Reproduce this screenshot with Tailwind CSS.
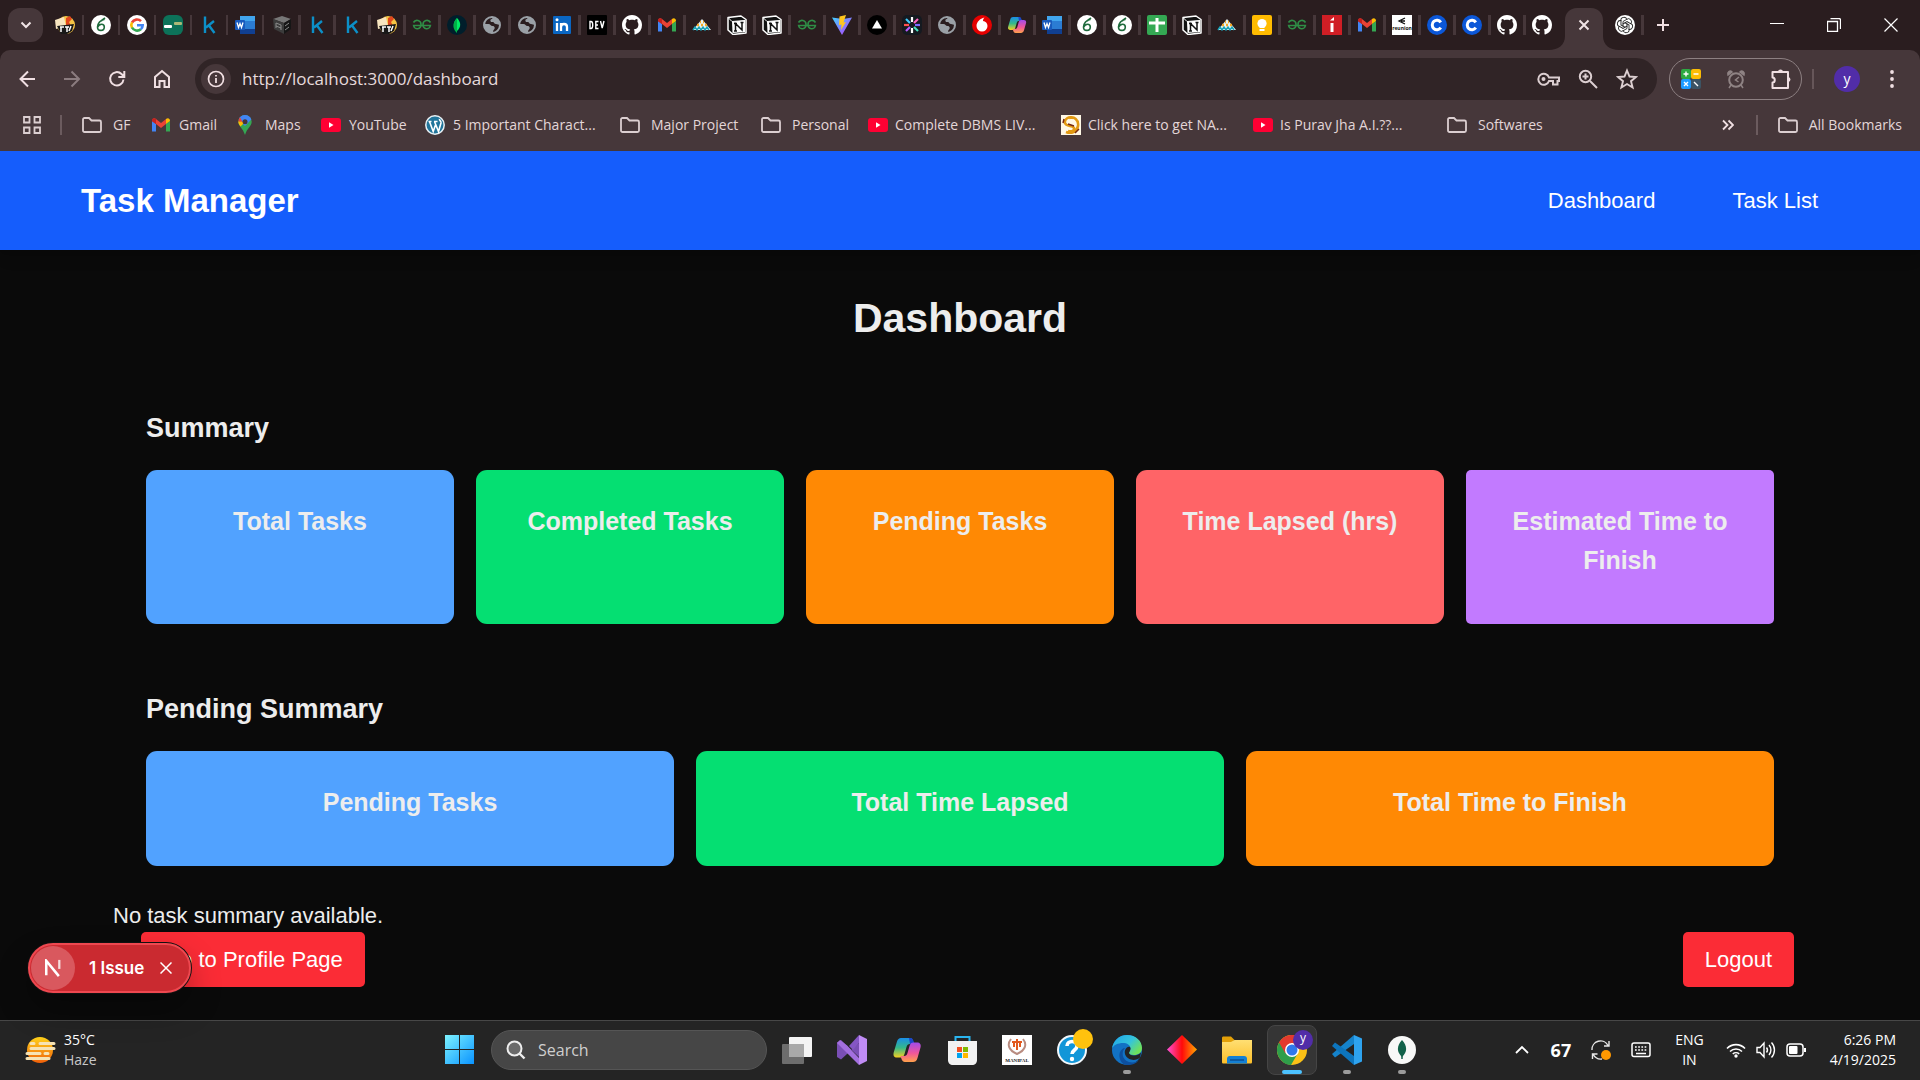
<!DOCTYPE html>
<html lang="en">
<head>
<meta charset="utf-8">
<title>Task Manager</title>
<script src="https://cdn.jsdelivr.net/npm/@tailwindcss/browser@4"></script>
</head>
<body class="min-h-screen flex flex-col bg-[#0a0a0a] text-[#ededed] font-['Liberation_Sans',Arial,sans-serif]">

<!-- Shared icon symbols -->
<svg class="absolute size-0" aria-hidden="true">
  <defs>
    <linearGradient id="vg" x1="0" y1="0" x2="1" y2="1"><stop offset="0" stop-color="#41d1ff"/><stop offset="1" stop-color="#bd34fe"/></linearGradient>
    <linearGradient id="cpl" x1="0" y1="0" x2="0" y2="1"><stop offset="0" stop-color="#1a8ee8"/><stop offset=".5" stop-color="#35b98a"/><stop offset="1" stop-color="#f5d020"/></linearGradient>
    <linearGradient id="cpr" x1="0" y1="0" x2="0" y2="1"><stop offset="0" stop-color="#a14bea"/><stop offset=".55" stop-color="#f0569a"/><stop offset="1" stop-color="#ffa14a"/></linearGradient>
    <linearGradient id="win" x1="0" y1="0" x2="1" y2="1"><stop offset="0" stop-color="#7df3ff"/><stop offset="1" stop-color="#0a93ff"/></linearGradient>
    <linearGradient id="sun" x1="0" y1="0" x2="0" y2="1"><stop offset="0" stop-color="#ffd21a"/><stop offset="1" stop-color="#f0600a"/></linearGradient>
    <linearGradient id="dia" x1="0" y1="0" x2="1" y2="0"><stop offset="0" stop-color="#ff4fd8"/><stop offset=".5" stop-color="#ff0a0a"/><stop offset="1" stop-color="#ffa800"/></linearGradient>
    <linearGradient id="edg" x1="0" y1="0" x2="1" y2=".6"><stop offset="0" stop-color="#1ea4e8"/><stop offset=".6" stop-color="#35c4dc"/><stop offset="1" stop-color="#6fe25a"/></linearGradient>
    <linearGradient id="fold" x1="0" y1="0" x2="0" y2="1"><stop offset="0" stop-color="#ffdf73"/><stop offset="1" stop-color="#fcbf2a"/></linearGradient>
  </defs>
  <symbol id="jt" viewBox="0 0 20 20"><circle cx="11" cy="10" r="9" fill="#f6c445"/><path d="M0 5l9-3 2 9-10 3z" fill="#f7e5c0"/><path d="M11 3l4-2 2 3-3 3 2 4-5-1z" fill="#e0461c"/><path d="M2 11l17-2-2 7-5 3H6z" fill="#181818"/><path d="M6 12v5M5 12h4M12 12v5M10 12h4M16 11l-2 5" stroke="#fff" stroke-width="1.500"/></symbol>
  <symbol id="six" viewBox="0 0 20 20"><circle cx="10" cy="10" r="10" fill="#fff"/><path d="M13.500 4.500c-4 0-7 4-7 7.500 0 2 1.300 3.400 3.300 3.400s3.500-1.500 3.500-3.400c0-1.700-1.200-2.800-2.700-2.800-1.800 0-3.200 1.300-4 3M10 6l4-3" fill="none" stroke="#1e6a3c" stroke-width="1.600"/></symbol>
  <symbol id="goog" viewBox="0 0 20 20"><circle cx="10" cy="10" r="10" fill="#fff"/><g fill="none" stroke-width="2.600"><path d="M14 6.200A5.700 5.700 0 0 0 5 7.500" stroke="#ea4335"/><path d="M5 7.300a5.700 5.700 0 0 0 0 5.500" stroke="#fbbc05"/><path d="M5 12.500a5.700 5.700 0 0 0 8.800 1.700" stroke="#34a853"/><path d="M13.800 14.200a5.500 5.500 0 0 0 1.900-4H10" stroke="#4285f4"/></g></symbol>
  <symbol id="grn" viewBox="0 0 20 20"><rect width="20" height="20" rx="6" fill="#0c7259"/><rect x="1" y="10" width="8" height="3" rx="1" fill="#fff"/><rect x="11" y="7" width="8" height="3" rx="1" fill="#a9b878"/></symbol>
  <symbol id="k" viewBox="0 0 20 20"><path d="M6 1.500V18M15 6l-8 6.500M10 10.500l5.500 7.500" fill="none" stroke="#0c8fc7" stroke-width="2.400"/></symbol>
  <symbol id="word" viewBox="0 0 20 20"><rect x="5" y="1" width="15" height="18" rx="1.500" fill="#2b7cd3"/><path d="M5 1h15v5H5z" fill="#41a5ee"/><path d="M5 14h15v5H5z" fill="#103f91"/><rect y="5" width="10" height="10" rx="1" fill="#185abd"/><path d="M2 7.500l1.500 5L5 8.500l1.500 4 1.500-5" fill="none" stroke="#fff" stroke-width="1.300"/></symbol>
  <symbol id="cube" viewBox="0 0 20 20"><path d="M10 1l9 3-7 4L1 4z" fill="#777"/><path d="M1 4l11 4v11L2 14z" fill="#3c3c3c"/><path d="M19 4l-7 4v11l7-5z" fill="#161616"/><path d="M4 8l5 2M4 11l5 2M4 8v5M9 10v5M13 11l4-3M13 15l4-3" stroke="#8a8a8a"/></symbol>
  <symbol id="gfg" viewBox="0 0 20 20"><g fill="none" stroke="#2f8d46" stroke-width="1.600"><path d="M1.500 7.500A4 4 0 0 1 9 9.500a3.700 3.700 0 0 1-7.400 1H18.400A3.700 3.700 0 0 1 11 9.500a4 4 0 0 1 7.500-2"/></g></symbol>
  <symbol id="leaf" viewBox="0 0 20 20"><circle cx="10" cy="10" r="10" fill="#001e2b"/><path d="M10 3c4 4 4.500 9 0 13-4.500-4-4-9 0-13z" fill="#00ed64"/><path d="M10 3v15c-1-1-4-4-3.500-8C7 6 9 5 10 3z" fill="#00b048"/></symbol>
  <symbol id="globe" viewBox="0 0 20 20"><circle cx="10" cy="10" r="8" fill="none" stroke="#9aa0a6" stroke-width="2"/><path d="M11 2l-1 2c-2 0-2 2-1 3h2c1 0 1 2 3 2l4 1c0-4-3-8-7-8zM2.500 9h4c2 0 2 2 4 2 2 0 3 2 1.500 3.500-1 1-1 2-1 3.500C6 18.500 2 15 2.500 9z" fill="#9aa0a6"/></symbol>
  <symbol id="linkedin" viewBox="0 0 20 20"><rect x="1" y="1" width="18" height="18" rx="1" fill="#0a66c2"/><path d="M5 8v8M9 8v8M9 12c0-4 6-4 6 0v4" fill="none" stroke="#fff" stroke-width="2.300"/><circle cx="5" cy="4.800" r="1.500" fill="#fff"/></symbol>
  <symbol id="dev" viewBox="0 0 20 20"><rect width="20" height="20" rx="1" fill="#000"/><path d="M3 6.500v7h1c2.300 0 2.300-7 0-7zM11.500 6.500H8.800v7h2.700M9 10h2M13.500 6l1.700 7L17 6" fill="none" stroke="#fff" stroke-width="1.400"/></symbol>
  <symbol id="gh" viewBox="0 0 16 16"><path fill="#fff" d="M8 0C3.580 0 0 3.580 0 8c0 3.540 2.290 6.530 5.470 7.590.4.070.55-.17.55-.38 0-.19-.01-.82-.01-1.490-2.010.37-2.530-.49-2.690-.94-.09-.23-.48-.94-.82-1.130-.28-.15-.68-.52-.01-.53.63-.01 1.080.58 1.230.82.72 1.210 1.870.87 2.330.66.07-.52.28-.87.51-1.070-1.780-.2-3.640-.89-3.640-3.950 0-.87.31-1.590.82-2.150-.08-.2-.36-1.020.08-2.120 0 0 .67-.21 2.200.82.64-.18 1.320-.27 2-.27s1.360.09 2 .27c1.530-1.040 2.200-.82 2.200-.82.44 1.100.16 1.920.08 2.120.51.56.82 1.270.82 2.150 0 3.070-1.870 3.750-3.650 3.950.29.25.54.73.54 1.480 0 1.070-.01 1.930-.01 2.200 0 .21.15.46.55.38A8.010 8.010 0 0 0 16 8c0-4.420-3.580-8-8-8z"/></symbol>
  <symbol id="gmail" viewBox="0 0 20 20"><path d="M1 6v10.500h4V9z" fill="#4285f4"/><path d="M19 6v10.500h-4V9z" fill="#34a853"/><path d="M1 6c0-3 2.500-3.300 4-2l5 4 5-4v5l-5 4-5-4-4-3z" fill="#ea4335"/><path d="M15 4c1.500-1.300 4-1 4 2l-4 3z" fill="#fbbc04"/><path d="M1 5.500C1 2.700 3.500 2.700 5 4v5L1 6z" fill="#c5221f"/></symbol>
  <symbol id="tri" viewBox="0 0 20 20"><path d="M10 4L1 15h18z" fill="#e6f3f3"/><path d="M1 15l2-3 2 3 2-3 2 3 2-3 2 3 2-3 2 3" stroke="#1aa3b8" fill="none" stroke-width="1.500"/><path d="M5 10h2M9 10h2M13 10h2M8 7h1M11 7h1" stroke="#f5a623" stroke-width="2.400"/></symbol>
  <symbol id="notion" viewBox="0 0 20 20"><path d="M1 2.500L14 1l5 3.500V18L6 19.500 1 15z" fill="#111" stroke="#fff" stroke-width="1.500" stroke-linejoin="round"/><path d="M5 6.500l13-1V17L5.500 18z" fill="#fff"/><path d="M1.500 3L5 6.500 18 5.500" stroke="#fff" fill="none"/><path d="M8.500 16V8.500L15 15V7.500M7 8.500h3M13.500 7.500h3M7 16h3" fill="none" stroke="#111" stroke-width="1.500"/></symbol>
  <symbol id="vite" viewBox="0 0 20 20"><path d="M0 2.500L10 20 20 2.500 11 4z" fill="url(#vg)"/><path d="M14 0L7.500 1.500 7 10l2.500-.5L9 15l5-8-2.500.5z" fill="#ffc61e"/></symbol>
  <symbol id="vercel" viewBox="0 0 20 20"><circle cx="10" cy="10" r="10" fill="#000"/><path d="M10 5l5 8.500H5z" fill="#fff"/></symbol>
  <symbol id="burst" viewBox="0 0 20 20"><rect width="20" height="20" rx="5" fill="#151a20"/><g stroke-width="2.200"><path d="M10 2v5" stroke="#fff"/><path d="M10 13v5" stroke="#fff"/><path d="M2 10h5" stroke="#ff4f4f"/><path d="M13 10h5" stroke="#7a6bff"/><path d="M4 4l4 4" stroke="#3ecbff"/><path d="M16 4l-4 4" stroke="#ff66c4"/><path d="M4 16l4-4" stroke="#b65cff"/><path d="M16 16l-4-4" stroke="#4be3c2"/></g></symbol>
  <symbol id="voda" viewBox="0 0 20 20"><circle cx="10" cy="10" r="10" fill="#e60000"/><path d="M12.500 2.500C8 3.500 4.500 7 4.500 11a5.500 5.500 0 0 0 11 0c0-2.800-2-4.600-4.500-5 0-1.500.5-2.700 1.500-3.500z" fill="#fff"/></symbol>
  <symbol id="copilot" viewBox="0 0 30 30"><path d="M9 3h9c2 0 2.500 1.500 3 3l1 3h-4c-2 0-3 1-3.500 3l-2 7c-.7 2.500-2 3.500-4 3.500H5c-3 0-4-2-3.300-5L5 6.500C5.700 4.200 7 3 9 3z" fill="url(#cpl)"/><path d="M17 3h1.500c2 0 2.500 1.500 3 3l1 3H18z" fill="#1c46c9"/><path d="M21 27h-8c-2 0-3-1.500-3.500-3L8.500 21H12c2 0 3-1 3.500-3l2-7c.7-2.500 2-3.500 4-3.500H25c3 0 4.300 2 3.500 5l-3 10.500C24.700 26 23 27 21 27z" fill="url(#cpr)"/></symbol>
  <symbol id="sheet" viewBox="0 0 20 20"><rect width="20" height="20" rx="2" fill="#34a853"/><path d="M10 3v14M2 8h16" stroke="#fff" stroke-width="3"/></symbol>
  <symbol id="keep" viewBox="0 0 20 20"><rect width="20" height="20" rx="2" fill="#ffbb00"/><circle cx="10" cy="8.500" r="4.600" fill="#fff"/><path d="M7.500 12h5v1h-5zM7.500 14h5v2h-5z" fill="#fff"/></symbol>
  <symbol id="ii" viewBox="0 0 20 20"><rect width="20" height="20" fill="#cf1e25"/><path d="M10 8v9" stroke="#fff" stroke-width="3"/><path d="M8 5.500L12 2v3.500z" fill="#fff"/></symbol>
  <symbol id="reunion" viewBox="0 0 20 20"><rect width="20" height="20" fill="#fff"/><path d="M13 3L7 6l6 3M9 6h4" fill="none" stroke="#111" stroke-width="1.300"/><text x="10" y="15" font-size="5" font-weight="700" text-anchor="middle" fill="#111">reunion</text></symbol>
  <symbol id="cc" viewBox="0 0 20 20"><circle cx="10" cy="10" r="10" fill="#0b57d8"/><path d="M13.800 7.300a4.700 4.700 0 1 0 0 5.400" fill="none" stroke="#fff" stroke-width="3"/></symbol>
  <symbol id="gpt" viewBox="0 0 20 20"><circle cx="10" cy="10" r="10" fill="#fff"/><g fill="none" stroke="#222" stroke-width=".9"><path id="petal" d="M8 11.500V6.500l3.500-2a3 3 0 0 1 4 4.500"/><use href="#petal" transform="rotate(60 10 10)"/><use href="#petal" transform="rotate(120 10 10)"/><use href="#petal" transform="rotate(180 10 10)"/><use href="#petal" transform="rotate(240 10 10)"/><use href="#petal" transform="rotate(300 10 10)"/></g></symbol>
  <symbol id="folder" viewBox="0 0 20 16"><path d="M1 13.500v-11C1 1.700 1.700 1 2.500 1H7l2.500 2.500h8c.8 0 1.500.7 1.500 1.500v8.500c0 .8-.7 1.500-1.500 1.500h-15C1.700 15 1 14.300 1 13.500z" fill="none" stroke="#dccfd1" stroke-width="1.800"/></symbol>
  <symbol id="yt" viewBox="0 0 20 14"><rect width="20" height="14" rx="3" fill="#ff0033"/><path d="M8 4.300v5.400L12.500 7z" fill="#fff"/></symbol>
</svg>

<!-- Browser chrome -->
<div class="bg-[#2a1d1f] font-['Open_Sans','Noto_Sans',sans-serif] text-[#e3d6d8]">
  <div class="flex h-[50px] items-center">
    <button aria-label="Search tabs" class="ml-2 mr-3 flex h-[34px] w-[35px] items-center justify-center rounded-xl bg-[#46373a]"><svg class="h-3 w-3" viewBox="0 0 12 12"><path d="M1.500 3.500L6 8l4.500-4.500" fill="none" stroke="#f0e4e6" stroke-width="2"/></svg></button>
    <div class="flex gap-[7px] pr-2 items-center">
      <svg class="size-5"><use href="#jt"/></svg><i class="h-5 w-0.5 bg-[#46373a]"></i>
      <svg class="size-5"><use href="#six"/></svg><i class="h-5 w-0.5 bg-[#46373a]"></i>
      <svg class="size-5"><use href="#goog"/></svg><i class="h-5 w-0.5 bg-[#46373a]"></i>
      <svg class="size-5"><use href="#grn"/></svg><i class="h-5 w-0.5 bg-[#46373a]"></i>
      <svg class="size-5"><use href="#k"/></svg><i class="h-5 w-0.5 bg-[#46373a]"></i>
      <svg class="size-5"><use href="#word"/></svg><i class="h-5 w-0.5 bg-[#46373a]"></i>
    </div>
    <div class="flex gap-1.5 items-center">
      <svg class="size-5"><use href="#cube"/></svg><i class="h-5 w-[3px] bg-[#46373a]"></i>
      <svg class="size-5"><use href="#k"/></svg><i class="h-5 w-[3px] bg-[#46373a]"></i>
      <svg class="size-5"><use href="#k"/></svg><i class="h-5 w-[3px] bg-[#46373a]"></i>
      <svg class="size-5"><use href="#jt"/></svg><i class="h-5 w-[3px] bg-[#46373a]"></i>
      <svg class="size-5"><use href="#gfg"/></svg><i class="h-5 w-[3px] bg-[#46373a]"></i>
      <svg class="size-5"><use href="#leaf"/></svg><i class="h-5 w-[3px] bg-[#46373a]"></i>
      <svg class="size-5"><use href="#globe"/></svg><i class="h-5 w-[3px] bg-[#46373a]"></i>
      <svg class="size-5"><use href="#globe"/></svg><i class="h-5 w-[3px] bg-[#46373a]"></i>
      <svg class="size-5"><use href="#linkedin"/></svg><i class="h-5 w-[3px] bg-[#46373a]"></i>
      <svg class="size-5"><use href="#dev"/></svg><i class="h-5 w-[3px] bg-[#46373a]"></i>
      <svg class="size-5"><use href="#gh"/></svg><i class="h-5 w-[3px] bg-[#46373a]"></i>
      <svg class="size-5"><use href="#gmail"/></svg><i class="h-5 w-[3px] bg-[#46373a]"></i>
      <svg class="size-5"><use href="#tri"/></svg><i class="h-5 w-[3px] bg-[#46373a]"></i>
      <svg class="size-5"><use href="#notion"/></svg><i class="h-5 w-[3px] bg-[#46373a]"></i>
      <svg class="size-5"><use href="#notion"/></svg><i class="h-5 w-[3px] bg-[#46373a]"></i>
      <svg class="size-5"><use href="#gfg"/></svg><i class="h-5 w-[3px] bg-[#46373a]"></i>
      <svg class="size-5"><use href="#vite"/></svg><i class="h-5 w-[3px] bg-[#46373a]"></i>
      <svg class="size-5"><use href="#vercel"/></svg><i class="h-5 w-[3px] bg-[#46373a]"></i>
      <svg class="size-5"><use href="#burst"/></svg><i class="h-5 w-[3px] bg-[#46373a]"></i>
      <svg class="size-5"><use href="#globe"/></svg><i class="h-5 w-[3px] bg-[#46373a]"></i>
      <svg class="size-5"><use href="#voda"/></svg><i class="h-5 w-[3px] bg-[#46373a]"></i>
      <svg class="size-5"><use href="#copilot"/></svg><i class="h-5 w-[3px] bg-[#46373a]"></i>
      <svg class="size-5"><use href="#word"/></svg><i class="h-5 w-[3px] bg-[#46373a]"></i>
      <svg class="size-5"><use href="#six"/></svg><i class="h-5 w-[3px] bg-[#46373a]"></i>
      <svg class="size-5"><use href="#six"/></svg><i class="h-5 w-[3px] bg-[#46373a]"></i>
      <svg class="size-5"><use href="#sheet"/></svg><i class="h-5 w-[3px] bg-[#46373a]"></i>
      <svg class="size-5"><use href="#notion"/></svg><i class="h-5 w-[3px] bg-[#46373a]"></i>
      <svg class="size-5"><use href="#tri"/></svg><i class="h-5 w-[3px] bg-[#46373a]"></i>
      <svg class="size-5"><use href="#keep"/></svg><i class="h-5 w-[3px] bg-[#46373a]"></i>
      <svg class="size-5"><use href="#gfg"/></svg><i class="h-5 w-[3px] bg-[#46373a]"></i>
      <svg class="size-5"><use href="#ii"/></svg><i class="h-5 w-[3px] bg-[#46373a]"></i>
      <svg class="size-5"><use href="#gmail"/></svg><i class="h-5 w-[3px] bg-[#46373a]"></i>
      <svg class="size-5"><use href="#reunion"/></svg><i class="h-5 w-[3px] bg-[#46373a]"></i>
      <svg class="size-5"><use href="#cc"/></svg><i class="h-5 w-[3px] bg-[#46373a]"></i>
      <svg class="size-5"><use href="#cc"/></svg><i class="h-5 w-[3px] bg-[#46373a]"></i>
      <svg class="size-5"><use href="#gh"/></svg><i class="h-5 w-[3px] bg-[#46373a]"></i>
      <svg class="size-5"><use href="#gh"/></svg>
    </div>
    <!-- active tab with flared feet -->
    <button aria-label="Close tab" class="-ml-[3px] h-[50px] w-[70px]">
      <svg class="h-[50px] w-[70px]" viewBox="0 0 70 50"><path d="M0 50c9 0 16-5 16-14V20c0-7 5-12 12-12h14c7 0 12 5 12 12v16c0 9 7 14 16 14z" fill="#46373a"/><path d="M30.500 20.500l9 9M39.500 20.500l-9 9" stroke="#f0e4e6" stroke-width="2"/></svg>
    </button>
    <div class="-ml-1 flex flex-1 items-center gap-1.5">
      <svg class="size-5"><use href="#gpt"/></svg><i class="h-5 w-[3px] bg-[#46373a]"></i>
      <button aria-label="New tab" class="ml-1.5"><svg class="size-3.5" viewBox="0 0 14 14"><path d="M7 1v12M1 7h12" stroke="#f0dfe2" stroke-width="2"/></svg></button>
    </div>
    <div class="flex items-center gap-[43px] pr-[22px]">
      <button aria-label="Minimize"><svg class="size-3.5" viewBox="0 0 14 14"><path d="M0 5.500h14" stroke="#fff"/></svg></button>
      <button aria-label="Restore"><svg class="size-3.5" viewBox="0 0 14 14"><path d="M.5 3.500h10v10H.5zM3.500.5H12A1.500 1.500 0 0 1 13.500 2v9" fill="none" stroke="#fff" stroke-width="1.300"/></svg></button>
      <button aria-label="Close"><svg class="size-3.5" viewBox="0 0 14 14"><path d="M.5.5l13 13M13.500.5l-13 13" stroke="#fff" stroke-width="1.200"/></svg></button>
    </div>
  </div>

  <div class="rounded-t-[10px] bg-[#46373a]">
    <div class="flex h-[58px] items-center pl-4">
      <div class="flex gap-[23px] pr-[22px]">
        <button aria-label="Back"><svg class="size-[22px]" viewBox="0 0 22 22"><path d="M19 11H5M12 3.500L4.500 11l7.500 7.500" fill="none" stroke="#f0dfe2" stroke-width="2"/></svg></button>
        <button aria-label="Forward"><svg class="size-[22px]" viewBox="0 0 22 22"><path d="M3 11h14M10.500 3.500L18 11l-7.500 7.500" fill="none" stroke="#8b7c7f" stroke-width="2"/></svg></button>
        <button aria-label="Reload"><svg class="size-[22px]" viewBox="0 0 22 22"><path d="M17.500 11.500a6.700 6.700 0 1 1-2-5.500l2.500 2.500M18.300 3v6h-6" fill="none" stroke="#f0dfe2" stroke-width="2"/></svg></button>
        <button aria-label="Home"><svg class="size-[22px]" viewBox="0 0 22 22"><path d="M4 19V9l7-6 7 6v10h-4.500v-6h-5v6z" fill="none" stroke="#f0dfe2" stroke-width="2"/></svg></button>
      </div>
      <div class="flex h-[42px] flex-1 items-center rounded-full bg-[#302426] pl-1.5 pr-[19px]">
        <button aria-label="Site information" class="mr-[11px] flex size-[30px] items-center justify-center rounded-full bg-[#46373a]"><svg class="size-[18px]" viewBox="0 0 18 18"><circle cx="9" cy="9" r="7.500" fill="none" stroke="#f0dfe2" stroke-width="1.700"/><path d="M9 8v5M9 5v1.600" stroke="#f0dfe2" stroke-width="1.800"/></svg></button>
        <input aria-label="Address" value="http://localhost:3000/dashboard" class="flex-1 bg-transparent text-[17px] text-[#e6dadc] outline-none">
        <div class="flex items-center gap-[18px]">
          <svg class="h-5 w-6" viewBox="0 0 24 20"><path d="M13 8.500h10v3.500h-1.500v3.500H17V12h-4a5.500 5.500 0 1 1 0-3.500z" fill="none" stroke="#dccfd1" stroke-width="2"/><circle cx="7.500" cy="10" r="2" fill="#dccfd1"/></svg>
          <svg class="size-5" viewBox="0 0 20 20"><path d="M12 12l7 7M4.500 7.500h6M7.500 4.500v6" stroke="#dccfd1" stroke-width="2"/><circle cx="7.500" cy="7.500" r="5.700" fill="none" stroke="#dccfd1" stroke-width="2"/></svg>
          <svg class="size-[22px]" viewBox="0 0 22 22"><path d="M11 2.500l2.500 6 6.500.5-5 4.200 1.600 6.300L11 16l-5.600 3.500L7 13.200 2 9l6.500-.5z" fill="none" stroke="#dccfd1" stroke-width="1.900"/></svg>
        </div>
      </div>
      <div class="ml-3 flex h-[42px] w-[133px] items-center justify-between rounded-full border border-[#8d8082] pl-2.5 pr-[9px]">
        <svg class="size-[22px]" viewBox="0 0 22 22"><rect x="1" y="1" width="10" height="10" rx="2" fill="#2da942"/><rect x="11" y="1" width="10" height="10" rx="2" fill="#fbbc05"/><rect x="1" y="11" width="10" height="10" rx="2" fill="#1e9bff"/><rect x="11" y="11" width="10" height="10" rx="2" fill="#3c5464"/><path d="M3.500 6h5M6 3.500v5M13.500 6h5M4 14l4 4M8 14l-4 4M14 14l4 4" stroke="#fff" stroke-width="1.400"/></svg>
        <svg class="size-5" viewBox="0 0 20 20"><circle cx="10" cy="11" r="6.800" fill="none" stroke="#8f8384" stroke-width="2"/><path d="M2 6C1 3 4 1 6 3zM18 6c1-3-2-5-4-3zM5 16l-2 3M15 16l2 3" fill="#8f8384" stroke="#8f8384" stroke-width="1.500"/><path d="M13 8l-3.500 3 3 2" fill="none" stroke="#8f8384" stroke-width="1.500"/></svg>
        <svg class="size-[22px]" viewBox="0 0 22 22"><path d="M2.500 4H18V10v3.500V20H2.500v-5.500c3 0 3-5 0-5z" fill="none" stroke="#f0dfe2" stroke-width="2" stroke-linejoin="round"/><path d="M8 4a2.500 2.500 0 0 1 5 0zM18 9a2.500 2.500 0 0 1 0 5z" fill="#f0dfe2"/></svg>
      </div>
      <i class="ml-2.5 h-5 w-0.5 bg-[#665659]"></i>
      <button class="ml-[20px] size-[26px] rounded-full bg-[#512da8] text-center text-sm leading-[22px] text-white">y</button>
      <button aria-label="Menu" class="ml-[30px] mr-[26px]"><svg class="h-[18px] w-1" viewBox="0 0 4 18"><circle cx="2" cy="2" r="1.900" fill="#f0dfe2"/><circle cx="2" cy="9" r="1.900" fill="#f0dfe2"/><circle cx="2" cy="16" r="1.900" fill="#f0dfe2"/></svg></button>
    </div>

    <div class="flex h-[43px] items-center pb-2.5 pl-[23px] pr-[18px] text-sm whitespace-nowrap">
      <svg class="size-[18px]" viewBox="0 0 18 18"><path d="M1 1h5.500v5.500H1zM11.500 1H17v5.500h-5.500zM1 11.500h5.500V17H1zM11.500 11.500H17V17h-5.500z" fill="none" stroke="#dccfd1" stroke-width="1.800"/></svg>
      <i class="ml-[19px] mr-5 h-5 w-0.5 bg-[#6b5b5e]"></i>
      <nav class="grid flex-1 grid-cols-[69px_85px_85px_104px_195px_141px_107px_193px_192px_194px_120px]">
        <a href="#" class="flex items-center gap-[11px]"><svg class="h-4 w-5"><use href="#folder"/></svg>GF</a>
        <a href="#" class="flex items-center gap-2"><svg class="size-5"><use href="#gmail"/></svg>Gmail</a>
        <a href="#" class="flex items-center gap-[11px]"><svg class="h-5 w-[18px]" viewBox="0 0 18 20"><path d="M9 0a6.700 6.700 0 0 0-6.700 6.700C2.300 11 7 13 9 20c2-7 6.700-9 6.700-13.300A6.700 6.700 0 0 0 9 0z" fill="#34a853"/><path d="M9 0a6.700 6.700 0 0 1 6.300 4.500L9 11 2.700 4.500A6.700 6.700 0 0 1 9 0z" fill="#4285f4"/><path d="M4 2.300A6.700 6.700 0 0 0 2.300 6.700L6.500 7z" fill="#ea4335"/><path d="M2.300 6.500c0 2 1 3.500 2.200 5L9 7z" fill="#fbbc04"/><circle cx="9" cy="6.700" r="2.500" fill="#46373a"/></svg>Maps</a>
        <a href="#" class="flex items-center gap-2"><svg class="h-3.5 w-5"><use href="#yt"/></svg>YouTube</a>
        <a href="#" class="flex items-center gap-2"><svg class="size-5" viewBox="0 0 20 20"><circle cx="10" cy="10" r="9.200" fill="#21759b" stroke="#e8f1f5" stroke-width="1.500"/><path d="M3.500 6.500h3M9 6.500h3.500M4.500 6.500l3.700 10L10.500 10M9.500 6.500l4 10L16 8c.5-2-2-2.500-1.500-4" fill="none" stroke="#fff" stroke-width="1.600"/></svg>5 Important Charact...</a>
        <a href="#" class="flex items-center gap-[11px]"><svg class="h-4 w-5"><use href="#folder"/></svg>Major Project</a>
        <a href="#" class="flex items-center gap-[11px]"><svg class="h-4 w-5"><use href="#folder"/></svg>Personal</a>
        <a href="#" class="flex items-center gap-[7px]"><svg class="h-3.5 w-5"><use href="#yt"/></svg>Complete DBMS LIV...</a>
        <a href="#" class="flex items-center gap-[7px]"><svg class="size-5" viewBox="0 0 20 20"><rect width="20" height="20" fill="#fff8e6"/><path d="M12 3C8 1 3 4 4 8s8 2 9 5-3 4-6 3M8 3c5-2 10 2 9 8s-7 8-12 6" fill="none" stroke="#e39a12" stroke-width="2.600"/><path d="M3 4l-1 4M18 14l-4 4M7 9l6 2" stroke="#7a2a10" stroke-width="1.500"/></svg>Click here to get NA...</a>
        <a href="#" class="flex items-center gap-[7px]"><svg class="h-3.5 w-5"><use href="#yt"/></svg>Is Purav Jha A.I.??...</a>
        <a href="#" class="flex items-center gap-[11px]"><svg class="h-4 w-5"><use href="#folder"/></svg>Softwares</a>
      </nav>
      <button aria-label="More bookmarks"><svg class="size-3" viewBox="0 0 12 12"><path d="M1 1.500L5.500 6 1 10.500M6.500 1.500L11 6l-4.500 4.500" fill="none" stroke="#f0dfe2" stroke-width="1.800"/></svg></button>
      <i class="ml-[22px] mr-5 h-5 w-0.5 bg-[#6b5b5e]"></i>
      <a href="#" class="flex items-center gap-[11px]"><svg class="h-4 w-5"><use href="#folder"/></svg>All Bookmarks</a>
    </div>
  </div>
</div>

<!-- Page header -->
<header class="flex h-[99px] items-center justify-between bg-blue-600 pl-[81px] pr-20 text-white shadow-lg">
  <h1 class="text-[33px] font-bold">Task Manager</h1>
  <nav class="flex gap-[33px] text-[22px]">
    <a href="#" class="px-[22px]">Dashboard</a>
    <a href="#" class="px-[22px]">Task List</a>
  </nav>
</header>

<main class="relative flex-1 px-[113px] pt-11 text-[22px] leading-[33px]">
  <h2 class="text-center text-[41px] font-bold leading-[49px]">Dashboard</h2>

  <section class="px-[33px] pt-[66px]">
    <h3 class="mb-[22px] text-[27px] font-bold leading-[39px]">Summary</h3>
    <div class="grid grid-cols-5 gap-[22px] text-center text-[25px] font-bold leading-[39px]">
      <div class="rounded-[11px] bg-blue-400 px-[33px] pt-8 pb-11">Total Tasks</div>
      <div class="rounded-[11px] bg-green-400 px-[33px] pt-8 pb-11">Completed Tasks</div>
      <div class="rounded-[11px] bg-orange-400 px-[33px] pt-8 pb-11">Pending Tasks</div>
      <div class="rounded-[11px] bg-red-400 px-[33px] pt-8 pb-11">Time Lapsed (hrs)</div>
      <div class="rounded-[5px] bg-purple-400 px-[33px] pt-8 pb-11">Estimated Time to Finish</div>
    </div>
  </section>

  <section class="px-[33px] pt-[66px]">
    <h3 class="mb-[22px] text-[27px] font-bold leading-[39px]">Pending Summary</h3>
    <div class="grid grid-cols-3 gap-[22px] text-center text-[25px] font-bold leading-[39px]">
      <div class="rounded-[11px] bg-blue-400 px-[33px] pt-8 pb-11">Pending Tasks</div>
      <div class="rounded-[11px] bg-green-400 px-[33px] pt-8 pb-11">Total Time Lapsed</div>
      <div class="rounded-[11px] bg-orange-400 px-[33px] pt-8 pb-11">Total Time to Finish</div>
    </div>
  </section>

  <p class="pt-[33px]">No task summary available.</p>
  <div class="flex justify-between pl-7 pr-[13px] text-white">
    <button class="rounded-[5px] bg-red-500 px-[22px] py-[11px]">Go to Profile Page</button>
    <button class="rounded-[5px] bg-red-500 px-[22px] py-[11px]">Logout</button>
  </div>

  <!-- dev tools issue badge floating over the page -->
  <div class="absolute bottom-[27px] left-7 flex h-[50px] w-[163px] items-center rounded-full border-2 border-[#ee4850] bg-[#ca2a30] pl-px text-white shadow-[0_0_0_1px_#111,0_16px_32px_rgba(0,0,0,0.3)]">
    <span class="flex size-11 items-center justify-center rounded-full bg-[#d9585e]"><svg class="size-[18px]" viewBox="0 0 20 20"><path d="M2.500 18V2l14 17" fill="none" stroke="#fff" stroke-width="2.800"/><path d="M17 1v10" stroke="#fff" stroke-width="2.500" opacity=".8"/></svg></span>
    <button class="ml-3.5 font-['Inter',sans-serif] text-[17px] font-semibold whitespace-nowrap">1 Issue</button>
    <button aria-label="Dismiss" class="ml-4"><svg class="size-3" viewBox="0 0 12 12"><path d="M.5.5l11 11M11.500.5l-11 11" stroke="#fff" stroke-width="1.500"/></svg></button>
  </div>
</main>

<!-- Windows taskbar -->
<footer class="grid h-[60px] grid-cols-[1fr_auto_1fr] items-center border-t border-[#474747] bg-[#242424] px-6 pb-0.5 font-['Open_Sans','Noto_Sans',sans-serif] text-sm leading-5 text-white">
  <div class="flex items-center gap-2">
    <svg class="h-[30px] w-8" viewBox="0 0 32 30"><circle cx="16" cy="15" r="13" fill="url(#sun)"/><path d="M7 8.500h3M16 8.500h14M7 13.500h23M3 18.500h13M21 18.500h3M3 23.500h22" stroke="#f6e3b4" stroke-width="3" stroke-linecap="round"/></svg>
    <p>35°C<br><span class="text-[#c8c8c8]">Haze</span></p>
  </div>

  <div class="flex items-center gap-[25px] pr-[58px]">
    <div class="flex items-center gap-[17px]">
      <button aria-label="Start" class="grid size-[29px]"><svg class="size-[29px]" viewBox="0 0 29 29"><path d="M0 0h14v14H0zM15 0h14v14H15zM0 15h14v14H0zM15 15h14v14H15z" fill="url(#win)"/></svg></button>
      <label class="-mr-2 flex h-10 w-[276px] items-center gap-3 rounded-full border border-[#555] bg-[#464646] pl-3.5 text-base"><svg class="size-5" viewBox="0 0 20 20"><circle cx="8.500" cy="8.500" r="7" fill="#6a6a6a" stroke="#eee" stroke-width="2"/><path d="M13.500 13.500l5 5" stroke="#eee" stroke-width="2.400"/></svg><input aria-label="Search" placeholder="Search" class="w-40 bg-transparent outline-none placeholder:text-[#cfcfcf]"></label>
    </div>
    <button aria-label="Task view" class="-ml-0.5"><svg class="size-[30px]" viewBox="0 0 30 30"><rect x="7" y="2" width="23" height="20" rx="1" fill="#f4f4f4"/><rect y="9" width="22" height="20" rx="1" fill="#6d6d6d"/><path d="M7 9h15v13H7z" fill="#a9a9a9"/></svg></button>
    <button aria-label="Visual Studio"><svg class="size-[30px]" viewBox="0 0 30 30"><path d="M0 7.500l4-2.500 18 17V8L4 24.500 0 22z" fill="#7a4fb5"/><path d="M22 0l8 4v22l-8 4V8z" fill="#c08cf5"/><path d="M3 5l7 5.500 12 12.500v7L0 8z" fill="#a36fdf"/><path d="M22 0L12 11l4 4 6-7z" fill="#8556c4"/></svg></button>
    <button aria-label="Copilot"><svg class="size-[30px]"><use href="#copilot"/></svg></button>
    <button aria-label="Store"><svg class="size-[30px]" viewBox="0 0 30 30"><path d="M8.500 7V2h14v5" fill="none" stroke="#2ab5f0" stroke-width="2"/><path d="M1 6h29v19c0 3-2 5-5 5H6c-3 0-5-2-5-5z" fill="#f2f2f2"/><path d="M10 12h5v5h-5z" fill="#f25022"/><path d="M16 12h5v5h-5z" fill="#7fba00"/><path d="M10 18h5v5h-5z" fill="#00a4ef"/><path d="M16 18h5v5h-5z" fill="#ffb900"/></svg></button>
    <button aria-label="Manipal"><svg class="size-[30px]" viewBox="0 0 30 30"><rect width="30" height="30" fill="#fff"/><path d="M9 4c-4 5-3 11 6 15 9-4 10-10 6-15" fill="none" stroke="#b98c80" stroke-width="2"/><path d="M10 7h10M12 7v5M15 4v11M18 7v5" stroke="#e2591f" stroke-width="2"/><text x="15" y="26.500" text-anchor="middle" font-size="5" font-weight="700" font-family="Liberation Serif" fill="#222">MANIPAL</text></svg></button>
    <button aria-label="Help" class="relative"><svg class="size-[30px]" viewBox="0 0 30 30"><circle cx="15" cy="15" r="14" fill="#1296d8" stroke="#f2f8fc" stroke-width="2"/><path d="M10 11c0-6 10-6 10 0 0 4-5 4-5 8" fill="none" stroke="#fff" stroke-width="3.600"/><circle cx="15" cy="24" r="2.200" fill="#fff"/></svg><i class="absolute -top-1.5 -right-1.5 size-5 rounded-full bg-[#ffc20e]"></i></button>
    <button aria-label="Edge" class="relative"><svg class="size-[30px]" viewBox="0 0 30 30"><circle cx="15" cy="15" r="15" fill="#1272c4"/><path d="M0 14C1 6 7 0 15 0c9 0 15 6 15 13 0 5-4 7-8 7-3 0-5-1-5-2s1.500-2 1.500-4.500C18.500 10 15 8 11 8 6 8 1 10 0 14z" fill="url(#edg)"/><path d="M13 13c-4 4-3 12 4 14 4 1 8 0 10-2-3 4-7 5-12 5C9 30 6 22 8 17c1-2 3-4 5-4z" fill="#0d4f9e"/><path d="M18.500 13.500c0 2.500-1.500 3.500-1.500 4.500s2 2.500 5 2.500c3 0 5-1 7-3l-1 5c-2 2-6 3-9 2-5-1-7-6-6-9 1-4 5.500-5 5.500-2z" fill="#242424"/></svg><i class="absolute -bottom-[9px] left-[11px] h-1 w-2 rounded-full bg-[#9b9b9b]"></i></button>
    <button aria-label="Diamond app"><svg class="size-[30px]" viewBox="0 0 30 30"><path d="M15 0l15 14.500L15 29 0 14.500z" fill="url(#dia)"/></svg></button>
    <button aria-label="File Explorer"><svg class="size-[30px]" viewBox="0 0 30 30"><path d="M0 3c0-1 .5-1.500 1.500-1.500H9L12.500 5 9 9H0z" fill="#e3a008"/><path d="M0 7h9l3.500-2H30v22c0 1-.5 1.500-1.500 1.500h-27C.5 28.500 0 28 0 27z" fill="url(#fold)"/><path d="M5 28.500V24c0-2 1-3 3-3h14c2 0 3 1 3 3v4.500z" fill="#1480d4"/><path d="M8 25h14" stroke="#0b4f93" stroke-width="1.500"/></svg></button>
    <button aria-label="Chrome" class="relative -mx-2.5 flex h-[50px] w-[50px] items-center rounded-lg border border-[#454545] bg-[#353535] pl-[9px]"><svg class="size-[30px]" viewBox="0 0 30 30"><circle cx="15" cy="15" r="15" fill="#fbc116"/><path d="M15 15L2 7.500A15 15 0 0 0 14 30l7-12z" fill="#2f9e4a"/><path d="M15 8h13.300A15 15 0 0 0 2 7.500l6.500 11z" fill="#e23a2e"/><circle cx="15" cy="15" r="7" fill="#fff"/><circle cx="15" cy="15" r="5.500" fill="#2f78ea"/></svg><span class="absolute top-1 right-[3px] size-5 rounded-full bg-[#512da8] text-center text-xs leading-[16px]">y</span><i class="absolute bottom-0 left-3.5 h-1 w-5 rounded-full bg-[#4cc2ff]"></i></button>
    <button aria-label="VS Code" class="relative"><svg class="size-[30px]" viewBox="0 0 30 30"><path d="M22 0l8 3.500v23L22 30z" fill="#2ea3ef"/><path d="M22 0L0 19l3 3.500L22 9z" fill="#1583cb"/><path d="M22 30L0 11l3-3.500L22 21z" fill="#0d75bd"/></svg><i class="absolute -bottom-[9px] left-[11px] h-1 w-2 rounded-full bg-[#9b9b9b]"></i></button>
    <button aria-label="MongoDB Compass" class="relative"><svg class="size-[30px]" viewBox="0 0 30 30"><circle cx="15" cy="15" r="14" fill="#f7f8f7"/><path d="M15 5c5.500 6 5.500 12 0 17-5.500-5-5.500-11 0-17z" fill="#116149"/><path d="M15 20v4" stroke="#116149" stroke-width="1.500"/></svg><i class="absolute -bottom-[9px] left-[11px] h-1 w-2 rounded-full bg-[#9b9b9b]"></i></button>
  </div>

  <div class="flex items-center justify-end">
    <svg class="h-2.5 w-3.5" viewBox="0 0 14 10"><path d="M1 8l6-6 6 6" fill="none" stroke="#fff" stroke-width="1.800"/></svg>
    <b class="ml-[22px] text-lg">67</b>
    <svg class="ml-5 size-5" viewBox="0 0 20 20"><path d="M1 10a8.500 8.500 0 0 1 16-4.500M18 1v5h-5M2 14c2 4 5 5.500 9 5M1.500 19v-5h5" fill="none" stroke="#e8e8e8" stroke-width="1.400"/><circle cx="15" cy="15" r="5" fill="#ff9800"/></svg>
    <svg class="ml-5 h-4 w-5" viewBox="0 0 20 16"><rect x="1" y="1" width="18" height="13.500" rx="2" fill="none" stroke="#fff" stroke-width="1.500"/><path d="M4 5h12M4 8h12" stroke="#fff" stroke-width="1.700" stroke-dasharray="1.700 1.500"/><path d="M5 11.500h10" stroke="#fff" stroke-width="1.500"/></svg>
    <p class="ml-6 text-center">ENG<br>IN</p>
    <svg class="ml-[22px] h-4 w-5" viewBox="0 0 20 16"><path d="M1 6.500a12.500 12.500 0 0 1 18 0M4 9.500a8.500 8.500 0 0 1 12 0M6.800 12a4.700 4.700 0 0 1 6.400 0" fill="none" stroke="#fff" stroke-width="1.600"/><circle cx="10" cy="14" r="1.700" fill="#fff"/></svg>
    <svg class="ml-2.5 h-[18px] w-5" viewBox="0 0 20 18"><path d="M1 6.500h3L8 2v14l-4-4.500H1z" fill="none" stroke="#fff" stroke-width="1.400"/><path d="M10.500 6.500a4 4 0 0 1 0 5M13 4a7.500 7.500 0 0 1 0 10M15.500 1.500a11 11 0 0 1 0 15" fill="none" stroke="#fff" stroke-width="1.400"/></svg>
    <svg class="ml-2.5 h-3.5 w-5" viewBox="0 0 20 14"><rect x="1" y="1" width="16" height="12" rx="3" fill="none" stroke="#fff" stroke-width="1.500"/><rect x="3" y="3" width="8.500" height="8" rx="1" fill="#fff"/><path d="M19 5v4" stroke="#fff" stroke-width="2"/></svg>
    <p class="ml-6 text-right">6:26 PM<br>4/19/2025</p>
  </div>
</footer>
</body>
</html>
